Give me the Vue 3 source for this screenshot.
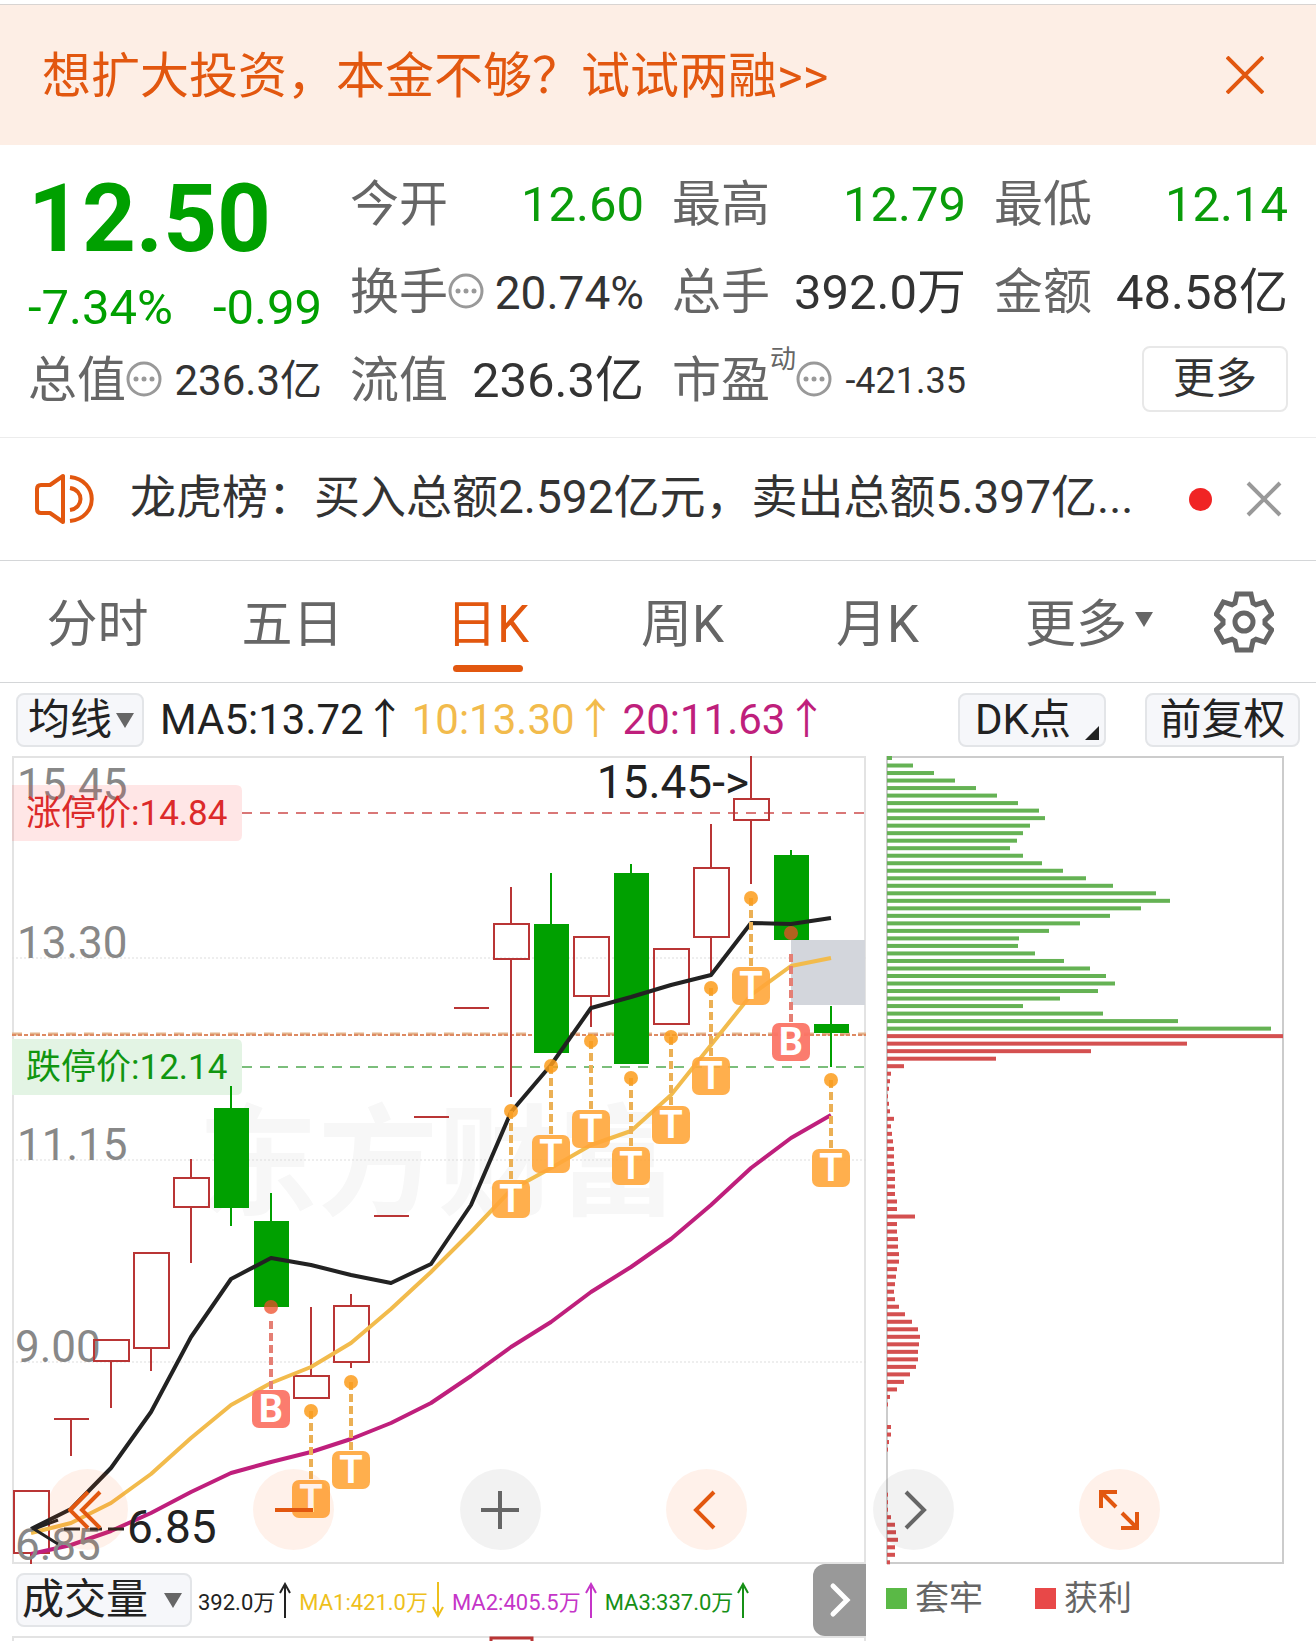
<template>
  <div class="pagina">
    <section class="banner">
      <a href="#" class="banner-link">想扩大投资，本金不够？试试两融&gt;&gt;</a>
      <button type="button" class="btn-icone" aria-label="关闭">
        <svg width="38" height="38" viewBox="0 0 38 38">
          <path d="M1 1L37 37M37 1L1 37" stroke="#e2570f" stroke-width="4" />
        </svg>
      </button>
    </section>

    <!-- Cotação -->
    <section class="cotacao">
      <div class="preco">
        <strong class="preco-atual">12.50</strong>
        <div class="variacao">
          <span>-7.34%</span>
          <span>-0.99</span>
        </div>
      </div>
      <div v-for="item in indicadores" :key="item.rotulo" class="indicador">
        <span class="rotulo">{{ item.rotulo }}</span>
        <sup v-if="item.sup" class="rotulo-sup">{{ item.sup }}</sup>
        <svg v-if="item.info" class="info" width="36" height="36" viewBox="0 0 36 36">
          <circle cx="18" cy="18" r="16" fill="none" stroke="#999" stroke-width="3" />
          <circle cx="10" cy="18" r="2.5" fill="#999" />
          <circle cx="18" cy="18" r="2.5" fill="#999" />
          <circle cx="26" cy="18" r="2.5" fill="#999" />
        </svg>
        <span class="valor" :class="[item.tamanho, { queda: item.queda }]">{{ item.valor }}</span>
      </div>
      <div class="indicador">
        <button type="button" class="btn-mais">更多</button>
      </div>
    </section>

    <!-- Aviso -->
    <section class="aviso">
      <svg class="aviso-icone" width="60" height="52" viewBox="0 0 60 52" fill="none" stroke="#e2570f" stroke-width="4">
        <path d="M29 3V49L16 40H7Q3 40 3 36V16Q3 12 7 12H16Z" stroke-linejoin="round" />
        <path d="M36 15C50 17 50 35 36 37M36 4C65 7 65 45 36 48" />
      </svg>
      <a href="#" class="aviso-texto">龙虎榜：买入总额2.592亿元，卖出总额5.397亿...</a>
      <span class="ponto"></span>
      <button type="button" class="btn-icone" aria-label="关闭公告">
        <svg width="36" height="36" viewBox="0 0 36 36">
          <path d="M2 2L34 34M34 2L2 34" stroke="#999" stroke-width="4" />
        </svg>
      </button>
    </section>

    <nav class="abas">
      <button
        v-for="aba in abas"
        :key="aba"
        type="button"
        class="aba"
        :class="{ ativa: aba === abaAtiva }"
        @click="abaAtiva = aba"
      >
        {{ aba }}
      </button>
      <button type="button" class="aba aba-mais">
        更多
        <svg width="18" height="15" viewBox="0 0 18 15"><path d="M0 0H18L9 15Z" fill="#666" /></svg>
      </button>
      <button type="button" class="aba-config" aria-label="设置">
        <svg width="60" height="62" viewBox="-30 -31 60 62" fill="none" stroke="#666" stroke-width="5">
          <path d="M-9 -19L-7 -28H7L9 -19L12 -17.3L20.7 -20.1L27.7 -7.9L21 -1.7V1.7L27.7 7.9L20.7 20.1L12 17.3L9 19L7 28H-7L-9 19L-12 17.3L-20.7 20.1L-27.7 7.9L-21 1.7V-1.7L-27.7 -7.9L-20.7 -20.1L-12 -17.3Z" />
          <circle r="9" />
        </svg>
      </button>
    </nav>

    <div class="medias">
      <label class="seletor">
        <select aria-label="主图指标">
          <option>均线</option>
        </select>
        <svg class="seta" width="18" height="15" viewBox="0 0 18 15"><path d="M0 0H18L9 15Z" fill="#666" /></svg>
      </label>
      <div class="medias-valores">
        <span class="ma5">MA5:13.72↑</span>
        <span class="ma10">10:13.30↑</span>
        <span class="ma20">20:11.63↑</span>
      </div>
      <button type="button" class="btn-cinza">
        DK点
        <svg class="canto" width="14" height="14" viewBox="0 0 14 14"><path d="M14 0V14H0Z" fill="#222" /></svg>
      </button>
      <button type="button" class="btn-cinza">前复权</button>
    </div>

    <div class="graficos">
      <!-- Candles -->
      <svg class="grafico" viewBox="0 0 854 808">
        <text class="marca" x="186" y="450">东方财富</text>
        <rect x="1" y="1" width="852" height="806" fill="none" stroke="#e3e3e3" stroke-width="2" />
        <line
          v-for="y in [202, 404, 606]"
          :key="y"
          x1="0"
          x2="854"
          :y1="y"
          :y2="y"
          stroke="#ddd"
          stroke-dasharray="2 2"
        />
        <rect x="779" y="184" width="74" height="65" fill="#d3d6dc" />

        <path d="M230 57H854" class="tracejada" stroke="#d05555" />
        <path d="M230 311H854" class="tracejada" stroke="#5aae5a" />
        <path d="M0 278H854" stroke="#e3b48c" stroke-width="3" stroke-dasharray="10 8" />
        <path d="M0 279H854" stroke="#dd8a63" stroke-width="2" stroke-dasharray="4 2" />

        <g class="eixo">
          <text x="5" y="44">15.45</text>
          <text x="5" y="202">13.30</text>
          <text x="5" y="404">11.15</text>
          <text x="3" y="606">9.00</text>
        </g>

        <path d="M0 29H224Q230 29 230 35V79Q230 85 224 85H0Z" fill="#ff3b3b" fill-opacity="0.13" />
        <text class="limite" x="14" y="69" fill="#dc2a2a">涨停价:14.84</text>
        <path d="M0 283H224Q230 283 230 289V333Q230 339 224 339H0Z" fill="#e3f4e4" />
        <text class="limite" x="14" y="323" fill="#109610">跌停价:12.14</text>

        <g v-for="(c, i) in candles" :key="i" stroke-width="2">
          <path :d="pavios(c, i)" :stroke="c.queda ? '#00a000' : '#b93535'" />
          <path :d="corpo(c, i)" :stroke="c.queda ? 'none' : '#b93535'" :fill="c.queda ? '#00a000' : 'none'" />
        </g>

        <polyline :points="pontos(ma5)" class="linha" stroke="#222" />
        <polyline :points="pontos(ma10)" class="linha" stroke="#f2bb4c" />
        <polyline :points="pontos(ma20)" class="linha" stroke="#bf1f7c" />

        <!-- Pontos de compra (B) e de operação (T) -->
        <g v-for="s in sinais" :key="s.i" :class="s.tipo === 'B' ? 'sinal-b' : 'sinal-t'">
          <line
            :x1="posX(s.i)"
            :x2="posX(s.i)"
            :y1="s.tipo === 'B' ? s.caixa - 69 : s.ponto"
            :y2="s.caixa"
            stroke-width="4"
            stroke-dasharray="8 4"
          />
          <circle :cx="posX(s.i)" :cy="s.ponto" r="7" />
          <rect :x="posX(s.i) - 19" :y="s.caixa" width="38" height="38" rx="7" />
          <text :x="posX(s.i)" :y="s.caixa + 32">{{ s.tipo }}</text>
        </g>

        <text class="extremo" x="737" y="42" text-anchor="end">15.45-&gt;</text>
        <g class="eixo"><text x="3" y="804">6.85</text></g>
        <path d="M46 764L22 773L46 788M52 773H68M78 773H90M96 773H112" fill="none" stroke="#222" stroke-width="3" />
        <text class="extremo" x="115" y="787">6.85</text>
      </svg>

      <!-- Distribuição de custos -->
      <svg class="grafico" viewBox="0 0 398 808">
        <rect x="1" y="1" width="396" height="806" fill="none" stroke="#ccc" stroke-width="2" />
        <rect
          v-for="(largura, i) in custos"
          :key="i"
          x="1"
          :y="i * 7.517"
          :width="largura"
          height="4"
          :fill="i < 37 ? '#65b254' : '#d45050'"
        />
      </svg>

      <div class="controles">
        <button
          v-for="ctl in controles"
          :key="ctl.nome"
          type="button"
          class="controle"
          :class="{ neutro: ctl.neutro }"
          :aria-label="ctl.nome"
        >
          <svg width="40" height="40" viewBox="0 0 40 40"><path :d="ctl.d" /></svg>
        </button>
      </div>
    </div>

    <div class="rodape">
      <div class="volume">
        <label class="seletor seletor-volume">
          <select aria-label="副图指标">
            <option>成交量</option>
          </select>
          <svg class="seta" width="18" height="15" viewBox="0 0 18 15"><path d="M0 0H18L9 15Z" fill="#666" /></svg>
        </label>
        <span v-for="v in volumes" :key="v.texto" class="volume-item" :class="v.classe">
          {{ v.texto }}
          <svg width="12" height="36" viewBox="0 0 12 36" fill="none" stroke="currentColor" stroke-width="2">
            <path :d="v.sobe ? 'M6 36V2M1 11L6 2L11 11' : 'M6 0V34M1 25L6 34L11 25'" />
          </svg>
        </span>
        <button type="button" class="btn-expandir" aria-label="展开">
          <svg width="24" height="36" viewBox="0 0 24 36">
            <path d="M5 4L19 18L5 32" fill="none" stroke="#fff" stroke-width="5" stroke-linecap="round" />
          </svg>
        </button>
      </div>
      <div class="legenda">
        <span class="legenda-item"><i class="quadrado verde"></i>套牢</span>
        <span class="legenda-item"><i class="quadrado vermelho"></i>获利</span>
      </div>
      <svg class="faixa" viewBox="0 0 854 5">
        <path d="M1 5V1H853V5" fill="none" stroke="#e3e3e3" stroke-width="2" />
        <path d="M479 5V2H520V5" fill="none" stroke="#b93535" stroke-width="3" />
      </svg>
    </div>
  </div>
</template>

<script setup>
import { ref } from 'vue'

const abas = ['分时', '五日', '日K', '周K', '月K']
const abaAtiva = ref('日K')

const indicadores = [
  { rotulo: '今开', valor: '12.60', queda: true },
  { rotulo: '最高', valor: '12.79', queda: true },
  { rotulo: '最低', valor: '12.14', queda: true },
  { rotulo: '换手', valor: '20.74%', info: true, tamanho: 'medio' },
  { rotulo: '总手', valor: '392.0万' },
  { rotulo: '金额', valor: '48.58亿' },
  { rotulo: '总值', valor: '236.3亿', info: true, tamanho: 'pequeno' },
  { rotulo: '流值', valor: '236.3亿' },
  { rotulo: '市盈', sup: '动', valor: '-421.35', info: true, tamanho: 'mini' }
]

// Valores já convertidos para a escala vertical do gráfico (0 = 15.45, 808 = 6.85)
const candles = [
  { max: 735, topo: 735, base: 797, min: 808 },
  { max: 663, topo: 663, base: 663, min: 700 },
  { max: 584, topo: 584, base: 605, min: 652 },
  { max: 497, topo: 497, base: 592, min: 615 },
  { max: 403, topo: 422, base: 451, min: 507 },
  { max: 330, topo: 352, base: 452, min: 470, queda: true },
  { max: 437, topo: 465, base: 551, min: 551, queda: true },
  { max: 551, topo: 620, base: 642, min: 642 },
  { max: 538, topo: 550, base: 606, min: 612 },
  { max: 460, topo: 460, base: 460, min: 460 },
  { max: 361, topo: 361, base: 361, min: 361 },
  { max: 252, topo: 252, base: 252, min: 252 },
  { max: 131, topo: 168, base: 203, min: 341 },
  { max: 117, topo: 168, base: 297, min: 297, queda: true },
  { max: 181, topo: 181, base: 240, min: 271 },
  { max: 108, topo: 117, base: 308, min: 308, queda: true },
  { max: 193, topo: 193, base: 268, min: 268 },
  { max: 68, topo: 112, base: 181, min: 217 },
  { max: 0, topo: 43, base: 64, min: 128 },
  { max: 94, topo: 99, base: 184, min: 184, queda: true },
  { max: 250, topo: 268, base: 277, min: 311, queda: true }
]

const ma5 = [773, 753, 712, 656, 581, 523, 502, 509, 519, 527, 508, 449, 356, 309, 252, 241, 229, 219, 167, 168, 162]
const ma10 = [777, 767, 747, 718, 682, 649, 627, 611, 587, 553, 516, 476, 434, 412, 389, 375, 339, 289, 239, 210, 202]
const ma20 = [798, 789, 775, 757, 736, 717, 706, 696, 683, 667, 647, 620, 591, 566, 536, 511, 483, 449, 412, 382, 359]

const sinais = [
  { i: 6, tipo: 'B', ponto: 551, caixa: 634 },
  { i: 7, tipo: 'T', ponto: 655, caixa: 724 },
  { i: 8, tipo: 'T', ponto: 626, caixa: 695 },
  { i: 12, tipo: 'T', ponto: 355, caixa: 424 },
  { i: 13, tipo: 'T', ponto: 310, caixa: 379 },
  { i: 14, tipo: 'T', ponto: 285, caixa: 354 },
  { i: 15, tipo: 'T', ponto: 322, caixa: 391 },
  { i: 16, tipo: 'T', ponto: 281, caixa: 350 },
  { i: 17, tipo: 'T', ponto: 232, caixa: 301 },
  { i: 18, tipo: 'T', ponto: 142, caixa: 211 },
  { i: 19, tipo: 'B', ponto: 177, caixa: 267 },
  { i: 20, tipo: 'T', ponto: 324, caixa: 393 }
]

// Largura de cada faixa de preço; as 37 primeiras estão acima do preço atual
const custos = [
  5, 26, 47, 68, 89, 110, 131, 152, 158, 143, 136, 130, 123, 136, 155, 176, 199, 226, 269, 283,
  254, 223, 193, 162, 132, 131, 148, 177, 203, 219, 228, 211, 173, 136, 216, 291, 384,
  396, 300, 204, 109, 17, 4, 3, 2, 1, 2, 3, 7, 4, 5, 6, 7, 7, 7, 8, 8, 8, 8,
  10, 10, 28, 10, 10, 11, 11, 12, 12, 10, 9, 8, 7, 8, 12, 18, 25, 31, 33, 32, 31, 31, 29, 23, 17,
  10, 3, 1, 0, 0, 4, 4, 2, 1, 0, 0, 0, 0, 0, 1, 1, 1, 4, 8, 9, 11, 8, 8, 3
]

const controles = [
  { nome: '最左', d: 'M20 2L2 20L20 38M32 2L14 20L32 38' },
  { nome: '缩小', d: 'M1 20H39' },
  { nome: '放大', d: 'M1 20H39M20 1V39', neutro: true },
  { nome: '左移', d: 'M27 2L9 20L27 38' },
  { nome: '右移', d: 'M13 2L31 20L13 38', neutro: true },
  { nome: '全屏', d: 'M2 18V2H18M2 2L17 17M22 38H38V22M38 38L23 23' }
]

const volumes = [
  { texto: '392.0万', sobe: true, classe: 'vol' },
  { texto: 'MA1:421.0万', sobe: false, classe: 'vol-ma1' },
  { texto: 'MA2:405.5万', sobe: true, classe: 'vol-ma2' },
  { texto: 'MA3:337.0万', sobe: true, classe: 'vol-ma3' }
]

const posX = (i) => 19 + i * 40
const pontos = (serie) => serie.map((y, i) => `${posX(i)},${y}`).join(' ')
const pavios = (c, i) => `M${posX(i)} ${c.max}V${c.topo}M${posX(i)} ${c.base}V${c.min}`
const corpo = (c, i) => `M${posX(i) - 17} ${c.topo}H${posX(i) + 18}V${c.base}H${posX(i) - 17}Z`
</script>

<style>
body {
  margin: 0;
  background: #fff;
}
</style>

<style scoped>
.pagina {
  padding-top: 4px;
  font-family: Roboto, "Noto Sans CJK SC", sans-serif;
  color: #333;
  overflow: hidden;
}

button {
  margin: 0;
  padding: 0;
  border: none;
  background: none;
  font-family: inherit;
  color: inherit;
  cursor: pointer;
}

a {
  color: inherit;
  text-decoration: none;
}

svg {
  display: block;
  flex-shrink: 0;
}

.btn-icone {
  display: flex;
}

.banner {
  display: flex;
  align-items: center;
  justify-content: space-between;
  min-height: 140px;
  padding: 0 52px 0 42px;
  border-top: 1px solid #d8d4d2;
  background: #fdeee5;
  color: #e2570f;
  font-size: 49px;
  line-height: 60px;
}

.banner-link {
  padding-top: 4px;
}

/* Cotação */
.cotacao {
  display: grid;
  grid-template-columns: repeat(4, 1fr);
  grid-auto-rows: 88px;
  column-gap: 28px;
  padding: 14px 28px;
  border-bottom: 1px solid #ececec;
}

.preco {
  grid-row: span 2;
  color: #00a000;
}

.preco-atual {
  display: block;
  font-size: 94px;
  font-weight: 700;
  line-height: 120px;
}

.variacao {
  display: flex;
  justify-content: space-between;
  font-size: 49px;
  line-height: 58px;
}

.indicador {
  display: flex;
  align-items: center;
  white-space: nowrap;
  line-height: 60px;
}

.rotulo {
  padding-top: 4px;
  font-size: 49px;
  color: #666;
}

.rotulo-sup {
  align-self: flex-start;
  font-size: 26px;
  line-height: 48px;
  color: #666;
}

.valor {
  margin-left: auto;
  padding-top: 4px;
  font-size: 49px;
}

.valor.medio {
  font-size: 46px;
}

.valor.pequeno {
  font-size: 42px;
}

.valor.mini {
  font-size: 36px;
}

.valor.queda {
  color: #0a9c0a;
}

.btn-mais {
  width: 146px;
  height: 66px;
  margin-left: auto;
  border: 2px solid #e8e8e8;
  border-radius: 8px;
  font-size: 42px;
  line-height: 58px;
}

/* Aviso */
.aviso {
  display: flex;
  align-items: center;
  min-height: 122px;
  padding: 0 34px;
  border-bottom: 1px solid #d4d6d8;
  font-size: 46px;
  line-height: 60px;
}

.aviso-texto {
  flex: 1;
  margin-left: 36px;
  padding-bottom: 4px;
  overflow: hidden;
  white-space: nowrap;
  text-overflow: ellipsis;
}

.ponto {
  width: 23px;
  height: 23px;
  margin-right: 34px;
  border-radius: 50%;
  background: #f02424;
}

/* Abas */
.abas {
  display: flex;
  min-height: 121px;
  padding-right: 31px;
  border-bottom: 1px solid #d4d6d8;
}

.aba {
  position: relative;
  display: flex;
  flex: 195;
  align-items: center;
  justify-content: center;
  padding-bottom: 4px;
  font-size: 51px;
  color: #666;
}

.aba.ativa {
  color: #e2570f;
}

.aba.ativa::after {
  content: "";
  position: absolute;
  bottom: 10px;
  width: 70px;
  height: 7px;
  border-radius: 4px;
  background: #e2570f;
}

.aba-mais {
  flex: 228;
  gap: 8px;
}

.aba-config {
  display: flex;
  flex: 82;
  align-items: center;
  justify-content: center;
}

/* Médias */
.medias {
  display: flex;
  align-items: center;
  min-height: 73px;
  padding: 0 16px;
}

.seletor {
  position: relative;
  flex-shrink: 0;
}

.seletor select {
  width: 128px;
  height: 54px;
  padding: 0 0 0 10px;
  border: 2px solid #e3e5e8;
  border-radius: 8px;
  background: #f6f7fa;
  appearance: none;
  font-family: inherit;
  font-size: 42px;
  line-height: 48px;
  color: #222;
}

.seta {
  position: absolute;
  top: 20px;
  right: 10px;
  pointer-events: none;
}

.medias-valores {
  display: flex;
  flex: 1;
  gap: 6px;
  margin-left: 16px;
  font-size: 42px;
  line-height: 50px;
  white-space: nowrap;
}

.ma5 {
  color: #222;
}

.ma10 {
  color: #f2bb4c;
}

.ma20 {
  color: #bf1f7c;
}

.btn-cinza {
  position: relative;
  width: 148px;
  height: 54px;
  padding-right: 18px;
  border: 2px solid #e3e5e8;
  border-radius: 8px;
  background: #f6f7fa;
  font-size: 42px;
  line-height: 48px;
  color: #222;
}

.btn-cinza + .btn-cinza {
  width: 155px;
  margin-left: 39px;
  padding-right: 0;
}

.canto {
  position: absolute;
  right: 5px;
  bottom: 5px;
}

/* Gráficos */
.graficos {
  position: relative;
  display: grid;
  grid-template-columns: 427fr 199fr;
  column-gap: 20px;
  padding: 0 32px 0 12px;
}

.grafico {
  width: 100%;
  height: auto;
  overflow: visible;
}

.marca {
  font-family: "Noto Sans CJK SC", sans-serif;
  font-size: 120px;
  font-weight: 700;
  fill: #f7f7f7;
}

.tracejada {
  stroke-width: 2;
  stroke-dasharray: 10 8;
  stroke-opacity: 0.8;
}

.eixo {
  font-size: 44px;
  fill: #888;
}

.extremo {
  font-size: 46px;
  fill: #222;
}

.limite {
  font-size: 35px;
}

.linha {
  fill: none;
  stroke-width: 4;
  stroke-linejoin: round;
}

.sinal-t line {
  stroke: #ebb055;
}

.sinal-t circle {
  fill: #fb9c1c;
  fill-opacity: 0.85;
}

.sinal-t rect {
  fill: #ffa63a;
  fill-opacity: 0.9;
}

.sinal-b line {
  stroke: #e57f74;
}

.sinal-b circle {
  fill: #ee4c28;
  fill-opacity: 0.75;
}

.sinal-b rect {
  fill: #fb7566;
  fill-opacity: 0.95;
}

.sinal-t text,
.sinal-b text {
  font-size: 38px;
  font-weight: 700;
  text-anchor: middle;
  fill: #fff;
}

.controles {
  position: absolute;
  right: 156px;
  bottom: 14px;
  left: 47px;
  display: flex;
  justify-content: space-between;
}

.controle {
  display: flex;
  align-items: center;
  justify-content: center;
  width: 81px;
  height: 81px;
  border-radius: 50%;
  background: rgba(255, 98, 20, 0.09);
}

.controle path {
  fill: none;
  stroke: #e2570f;
  stroke-width: 4;
}

.controle.neutro {
  background: rgba(0, 0, 0, 0.05);
}

.controle.neutro path {
  stroke: #666;
}

/* Rodapé */
.rodape {
  display: grid;
  grid-template-columns: minmax(0, 427fr) minmax(0, 199fr);
  column-gap: 20px;
  padding: 0 32px 0 12px;
}

.volume {
  display: flex;
  align-items: center;
  min-height: 72px;
  padding-left: 4px;
}

.seletor-volume {
  margin-right: 6px;
}

.seletor-volume select {
  width: 176px;
  padding-left: 4px;
}

.volume-item {
  display: flex;
  align-items: center;
  gap: 4px;
  margin-right: 8px;
  font-size: 22px;
  white-space: nowrap;
}

.vol {
  color: #222;
}

.vol-ma1 {
  color: #eec01c;
}

.vol-ma2 {
  color: #c535c8;
}

.vol-ma3 {
  color: #169016;
}

.btn-expandir {
  display: flex;
  flex-shrink: 0;
  align-items: center;
  align-self: stretch;
  justify-content: center;
  width: 53px;
  margin-left: auto;
  border-radius: 12px 0 0 12px;
  background: #999;
}

.legenda {
  display: flex;
  align-items: center;
  gap: 52px;
  padding-bottom: 4px;
  font-size: 34px;
  line-height: 40px;
  color: #666;
}

.legenda-item {
  display: flex;
  align-items: center;
  gap: 8px;
}

.quadrado {
  width: 21px;
  height: 21px;
}

.verde {
  background: #5ab946;
}

.vermelho {
  background: #e84848;
}

.faixa {
  width: 100%;
  height: auto;
}
</style>
